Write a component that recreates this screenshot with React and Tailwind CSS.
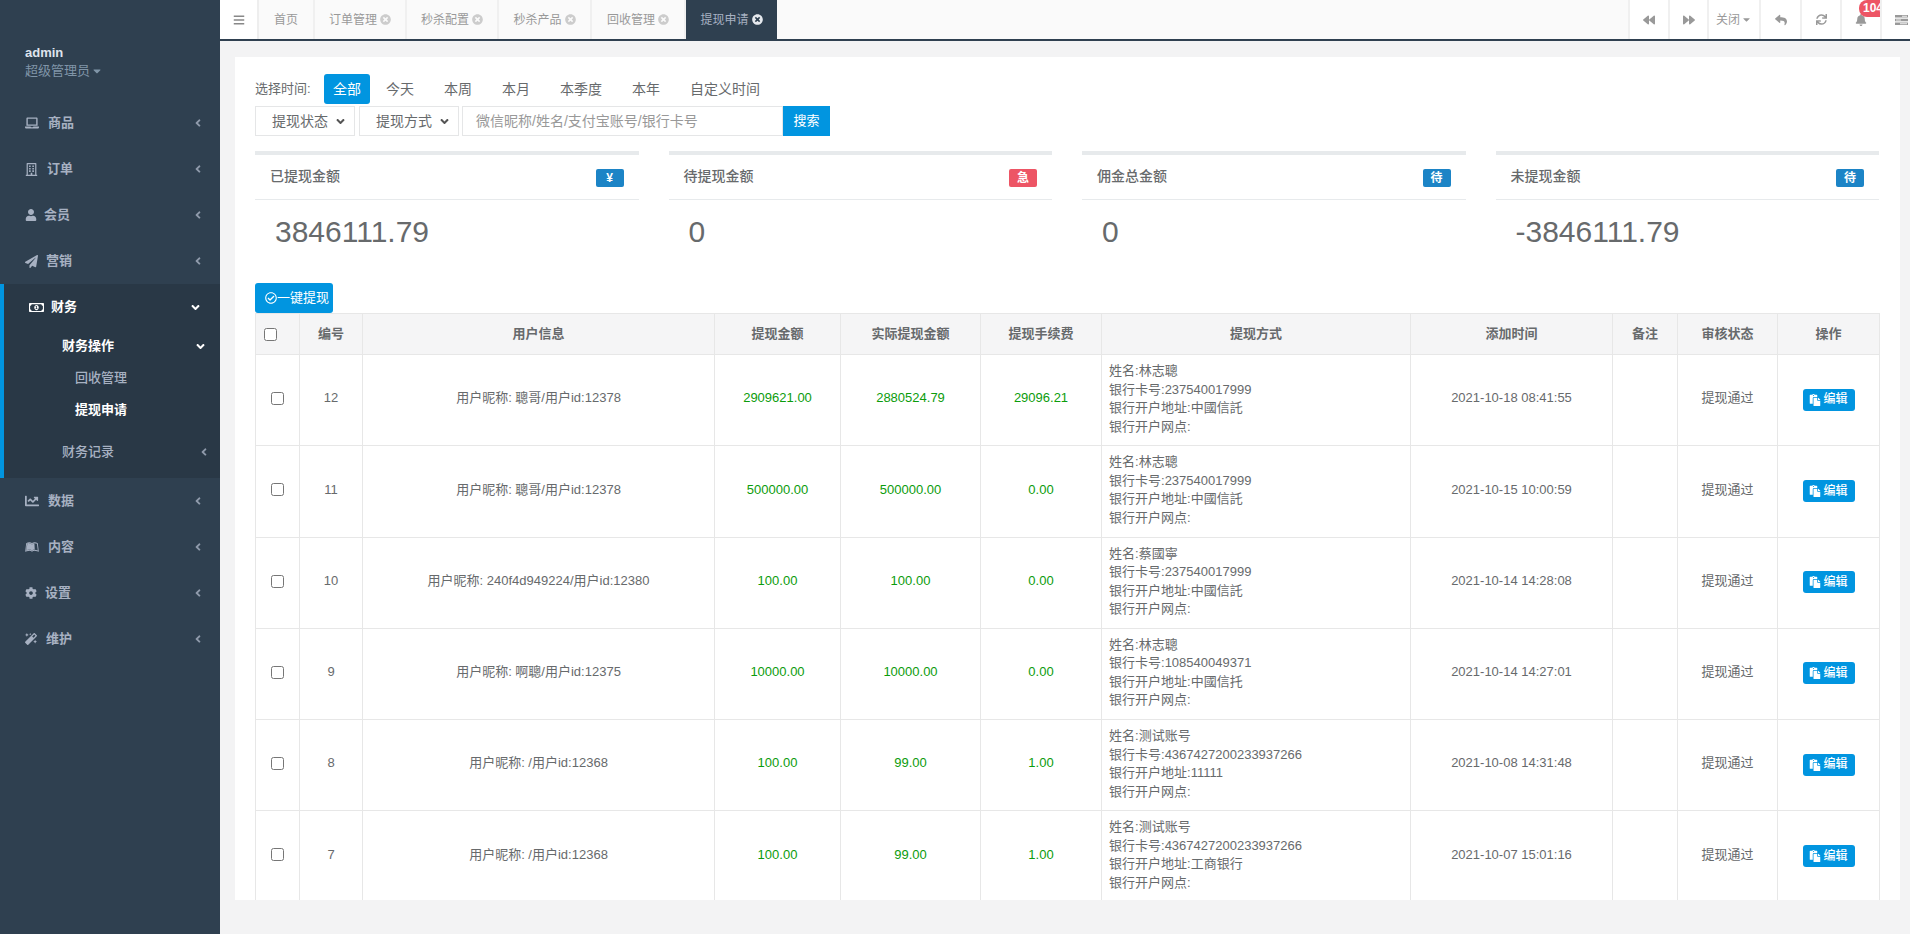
import React from 'react';
import {
  FaLaptop, FaRegBuilding, FaUser, FaPaperPlane, FaRegMoneyBillAlt, FaChartLine, FaLeanpub, FaCog, FaMagic,
  FaBars, FaBackward, FaForward, FaReply, FaSync, FaBell, FaTimesCircle, FaCaretDown,
  FaAngleLeft, FaAngleDown, FaRegCheckCircle, FaPaste,
} from 'react-icons/fa';

const FONT = "font-['Liberation_Sans','Noto_Sans_CJK_SC',sans-serif]";

const menuTop = [
  { icon: FaLaptop, label: '商品', size: 'text-[14px]', gap: 'ml-[9px]' },
  { icon: FaRegBuilding, label: '订单', size: 'text-[13px]', gap: 'ml-[9px]' },
  { icon: FaUser, label: '会员', size: 'text-[12px]', gap: 'ml-[7px]' },
  { icon: FaPaperPlane, label: '营销', size: 'text-[13px]', gap: 'ml-[8px]' },
];

const menuBottom = [
  { icon: FaChartLine, label: '数据', size: 'text-[14px]', gap: 'ml-[9px]' },
  { icon: FaLeanpub, label: '内容', size: 'text-[14px]', gap: 'ml-[9px]' },
  { icon: FaCog, label: '设置', size: 'text-[12px]', gap: 'ml-[8px]' },
  { icon: FaMagic, label: '维护', size: 'text-[12px]', gap: 'ml-[9px]' },
];

const tabs = [
  ['订单管理', 'w-[92px]'],
  ['秒杀配置', 'w-[92px]'],
  ['秒杀产品', 'w-[93px]'],
  ['回收管理', 'w-[94px]'],
];
const times = ['今天', '本周', '本月', '本季度', '本年', '自定义时间'];

const stats = [
  { title: '已提现金额', badge: '¥', color: 'bg-[#1c84c6]', value: '3846111.79' },
  { title: '待提现金额', badge: '急', color: 'bg-[#ed5565]', value: '0' },
  { title: '佣金总金额', badge: '待', color: 'bg-[#1c84c6]', value: '0' },
  { title: '未提现金额', badge: '待', color: 'bg-[#1c84c6]', value: '-3846111.79' },
];

const columns = [
  ['', 'w-[44px]'],
  ['编号', 'w-[63px]'],
  ['用户信息', 'w-[352px]'],
  ['提现金额', 'w-[126px]'],
  ['实际提现金额', 'w-[140px]'],
  ['提现手续费', 'w-[121px]'],
  ['提现方式', 'w-[309px]'],
  ['添加时间', 'w-[202px]'],
  ['备注', 'w-[65px]'],
  ['审核状态', 'w-[100px]'],
  ['操作', 'w-[102px]'],
];

const rows = [
  { id: 12, user: '用户昵称: 聰哥/用户id:12378', amount: '2909621.00', real: '2880524.79', fee: '29096.21', name: '林志聰', card: '237540017999', bank: '中國信託', time: '2021-10-18 08:41:55' },
  { id: 11, user: '用户昵称: 聰哥/用户id:12378', amount: '500000.00', real: '500000.00', fee: '0.00', name: '林志聰', card: '237540017999', bank: '中國信託', time: '2021-10-15 10:00:59' },
  { id: 10, user: '用户昵称: 240f4d949224/用户id:12380', amount: '100.00', real: '100.00', fee: '0.00', name: '蔡國寧', card: '237540017999', bank: '中國信託', time: '2021-10-14 14:28:08' },
  { id: 9, user: '用户昵称: 啊聰/用户id:12375', amount: '10000.00', real: '10000.00', fee: '0.00', name: '林志聰', card: '108540049371', bank: '中國信托', time: '2021-10-14 14:27:01' },
  { id: 8, user: '用户昵称: /用户id:12368', amount: '100.00', real: '99.00', fee: '1.00', name: '测试账号', card: '4367427200233937266', bank: '11111', time: '2021-10-08 14:31:48' },
  { id: 7, user: '用户昵称: /用户id:12368', amount: '100.00', real: '99.00', fee: '1.00', name: '测试账号', card: '4367427200233937266', bank: '工商银行', time: '2021-10-07 15:01:16' },
];

function MenuItem({ item }) {
  const Icon = item.icon;
  return (
    <div className="h-[46px] pl-[25px] pr-[16px] flex items-center text-[#a7b1c2] text-[13px] font-semibold">
      <Icon className={item.size} />
      <span className={item.gap}>{item.label}</span>
      <FaAngleLeft className="ml-auto text-[12px] opacity-80" />
    </div>
  );
}

function Sidebar() {
  return (
    <aside className="w-[220px] shrink-0 bg-[#2f4050] pt-[44px]">
      <div className="pl-[25px] h-[56px]">
        <div className="text-[13px] font-bold leading-[18px] text-[#dfe4ed]">admin</div>
        <div className="text-[13px] leading-[18px] text-[#8095a8] flex items-center">
          超级管理员
          <FaCaretDown className="ml-[1px] text-[12px]" />
        </div>
      </div>
      <div>
        {menuTop.map((m) => <MenuItem key={m.label} item={m} />)}
      </div>
      <div className="bg-[#293846] border-l-4 border-[#0195e0] h-[194px] text-[13px]">
        <div className="h-[46px] pl-[25px] pr-[18px] flex items-center text-white font-semibold">
          <FaRegMoneyBillAlt className="text-[15px]" />
          <span className="ml-[7px]">财务</span>
          <FaAngleDown className="ml-auto text-[13px]" />
        </div>
        <div className="h-[32px] pl-[58px] pr-[13px] flex items-center text-white font-bold">
          财务操作
          <FaAngleDown className="ml-auto text-[13px]" />
        </div>
        <div className="h-[32px] pl-[71px] flex items-center text-[#a7b1c2] font-medium">回收管理</div>
        <div className="h-[32px] pl-[71px] flex items-center text-white font-bold">提现申请</div>
        <div className="h-[52px] pl-[58px] pr-[10px] flex items-center text-[#a7b1c2] font-medium">
          财务记录
          <FaAngleLeft className="ml-auto text-[12px] opacity-80" />
        </div>
      </div>
      <div>
        {menuBottom.map((m) => <MenuItem key={m.label} item={m} />)}
      </div>
    </aside>
  );
}

function TopBar() {
  return (
    <div className="h-[41px] shrink-0 bg-white border-b-2 border-[#2f4050] flex text-[12px] text-[#999]">
      <div className="w-[39px] flex items-center justify-center border-r-2 border-[#eeeeee]">
        <FaBars className="text-[12px] text-[#888]" />
      </div>
      <div className="w-[56px] bg-[#fafafa] flex items-center justify-center border-r-2 border-[#f0f0f0]">首页</div>
      {tabs.map(([t, w]) => (
        <div key={t} className={`${w} bg-[#fafafa] flex items-center justify-center border-r-2 border-[#f0f0f0]`}>
          {t}
          <FaTimesCircle className="ml-[3px] text-[11px] text-[#ccc]" />
        </div>
      ))}
      <div className="w-[91px] bg-[#2f4050] text-[#a7b1c2] flex items-center justify-center">
        提现申请
        <FaTimesCircle className="ml-[3px] text-[11px] text-[#e6e9ee]" />
      </div>
      <div className="flex-1 bg-[#fafafa]" />
      <div className="w-[40px] flex items-center justify-center border-l-2 border-[#f0f0f0]"><FaBackward className="text-[12px]" /></div>
      <div className="w-[39px] flex items-center justify-center border-l-2 border-[#f0f0f0]"><FaForward className="text-[12px]" /></div>
      <div className="w-[52px] flex items-center justify-center border-l-2 border-[#f0f0f0]">
        关闭
        <FaCaretDown className="ml-[1px] text-[11px]" />
      </div>
      <div className="w-[41px] flex items-center justify-center border-l-2 border-[#f0f0f0]"><FaReply className="text-[12px]" /></div>
      <div className="w-[40px] flex items-center justify-center border-l-2 border-[#f0f0f0]"><FaSync className="text-[11px]" /></div>
      <div className="w-[40px] relative overflow-hidden flex items-center justify-center border-l-2 border-[#f0f0f0]">
        <FaBell className="text-[12px]" />
        <span className="absolute left-[17px] top-0 h-[17px] min-w-[28px] pl-[4px] rounded-[8px] bg-[#ed5565] text-white text-[12px] font-bold leading-[17px]">104</span>
      </div>
      <div className="w-[30px] overflow-hidden pl-[13px] flex items-center border-l-2 border-[#f0f0f0]">
        <svg width="13" height="10" viewBox="0 0 13 10" className="shrink-0" fill="#999">
          <path d="M0 0h13v2.6H0zM0 3.7h13v2.6H0zM0 7.4h13V10H0z" />
          <path d="M7 .8h5v1H7zM1 4.5h5v1H1zM5 8.2h7v1H5z" fill="#eee" />
        </svg>
      </div>
    </div>
  );
}

function Filters() {
  return (
    <div>
      <div className="flex items-center h-[30px] text-[14px]">
        <span className="w-[69px] text-[13px]">选择时间:</span>
        <button className="h-[30px] w-[46px] mr-px rounded-[3px] bg-[#0195e0] text-white">全部</button>
        {times.map((t) => <span key={t} className="px-[15px]">{t}</span>)}
      </div>
      <div className="flex h-[30px] mt-[2px] text-[14px]">
        <div className="w-[100px] pl-[16px] pr-[7px] border border-[#e5e6e7] flex items-center justify-between">
          提现状态
          <FaAngleDown className="text-[13px] text-[#555]" />
        </div>
        <div className="w-[100px] ml-[4px] pl-[16px] pr-[7px] border border-[#e5e6e7] flex items-center justify-between">
          提现方式
          <FaAngleDown className="text-[13px] text-[#555]" />
        </div>
        <div className="w-[321px] ml-[3px] pl-[13px] border border-[#e5e6e7] flex items-center text-[#999]">
          微信昵称/姓名/支付宝账号/银行卡号
        </div>
        <button className="w-[47px] bg-[#0195e0] text-white text-[13px]">搜索</button>
      </div>
    </div>
  );
}

function Stats() {
  return (
    <div className="grid grid-cols-4 gap-[30px] mt-[15px]">
      {stats.map((s) => (
        <div key={s.title} className="h-[132px] border-t-4 border-[#e7eaec]">
          <div className="h-[45px] px-[15px] flex items-start justify-between border-b border-[#e7eaec]">
            <span className="mt-[12px] text-[14px] leading-[18px] font-medium">{s.title}</span>
            <span className={`mt-[14px] w-[28px] h-[18px] rounded-[2px] ${s.color} text-white text-[12px] font-bold leading-[18px] text-center`}>{s.badge}</span>
          </div>
          <div className="pl-[20px] pt-[14px] text-[30px] leading-[36px]">{s.value}</div>
        </div>
      ))}
    </div>
  );
}

function WithdrawTable() {
  return (
    <table className="table-fixed border-collapse w-[1624px] text-[13px] leading-[18.57px]">
      <colgroup>
        {columns.map(([name, w], i) => <col key={i} className={w} />)}
      </colgroup>
      <thead>
        <tr className="bg-[#f5f5f6] h-[41px]">
          {columns.map(([name], i) => (
            <th key={i} className="border border-[#e7e7e7] font-bold text-center p-0">
              {i === 0 ? <input type="checkbox" className="block ml-[8px]" /> : name}
            </th>
          ))}
        </tr>
      </thead>
      <tbody>
        {rows.map((r) => (
          <tr key={r.id} className="text-center">
            <td className="border border-[#e7e7e7] p-0 pb-[3px]"><input type="checkbox" className="block mx-auto" /></td>
            <td className="border border-[#e7e7e7] pb-[3px]">{r.id}</td>
            <td className="border border-[#e7e7e7] pb-[3px]">{r.user}</td>
            <td className="border border-[#e7e7e7] pb-[3px] text-[#0c9c0c]">{r.amount}</td>
            <td className="border border-[#e7e7e7] pb-[3px] text-[#0c9c0c]">{r.real}</td>
            <td className="border border-[#e7e7e7] pb-[3px] text-[#0c9c0c]">{r.fee}</td>
            <td className="border border-[#e7e7e7] text-left pt-[7px] pb-[9px] px-[7px]">
              <div>姓名:{r.name}</div>
              <div>银行卡号:{r.card}</div>
              <div>银行开户地址:{r.bank}</div>
              <div>银行开户网点:</div>
            </td>
            <td className="border border-[#e7e7e7] pb-[3px]">{r.time}</td>
            <td className="border border-[#e7e7e7]"></td>
            <td className="border border-[#e7e7e7] pb-[3px]">提现通过</td>
            <td className="border border-[#e7e7e7] pb-[1px]">
              <button className="inline-flex items-center justify-center w-[52px] h-[22px] rounded-[3px] bg-[#0195e0] text-white text-[12px] font-medium align-middle">
                <FaPaste className="text-[12px] mr-[2px]" />编辑
              </button>
            </td>
          </tr>
        ))}
      </tbody>
    </table>
  );
}

export default function App() {
  return (
    <div className={`${FONT} h-screen flex overflow-hidden text-[#676a6c] bg-[#f3f3f4]`}>
      <Sidebar />
      <div className="flex-1 min-w-0 flex flex-col">
        <TopBar />
        <div className="flex-1 min-h-0 pt-[16px] pl-[15px] pr-[10px] pb-[34px]">
          <div className="h-full bg-white overflow-hidden pt-[17px] pl-[20px] pr-[21px]">
            <Filters />
            <Stats />
            <button className="flex items-center h-[30px] w-[78px] pl-[10px] rounded-[3px] bg-[#0195e0] text-white text-[13px]">
              <FaRegCheckCircle className="text-[12px]" />一键提现
            </button>
            <WithdrawTable />
          </div>
        </div>
      </div>
    </div>
  );
}
